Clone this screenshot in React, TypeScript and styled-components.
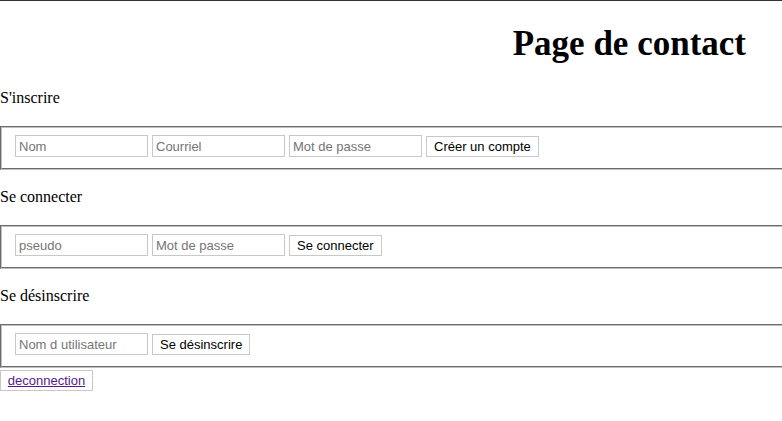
import React from "react";
import styled, { createGlobalStyle } from "styled-components";

const Global = createGlobalStyle`
  html, body { margin: 0; padding: 0; background: #fff; }
  body { font-family: "Liberation Serif", "Times New Roman", serif; font-size: 16px; color: #000; }
`;

const Page = styled.div`
  border-top: 1px solid #333;
  overflow: hidden;
`;

const Header = styled.header`
  display: flex;
  justify-content: flex-end;
  padding-right: 36px;
`;

const Title = styled.h1`
  margin: 21px 0 0;
  font-family: "Liberation Serif", "Times New Roman", serif;
  font-weight: bold;
  font-size: 35px;
  line-height: 44px;
`;

const SectionLabel = styled.p<{ $first?: boolean }>`
  margin: ${(p) => (p.$first ? "23px" : "18px")} 0 19px;
  line-height: 18px;
  font-size: 16px;
`;

const Fieldset = styled.fieldset`
  margin: 0 -4px 0 0;
  padding: 7px 12px 11px 13px;
  border: 2px groove #c0c0c0;
  display: flex;
  align-items: center;
  gap: 4px;
  min-width: 0;
`;

const Input = styled.input`
  box-sizing: border-box;
  width: 133px;
  height: 22px;
  margin: 0;
  padding: 1px 3px;
  border: 1px solid #c8c8c8;
  font-family: "Liberation Sans", Arial, sans-serif;
  font-size: 13px;
  color: #000;
  outline: none;
  &::placeholder { color: #757575; }
`;

const Button = styled.button`
  box-sizing: border-box;
  height: 21px;
  margin: 0;
  padding: 0 7px;
  background: #fff;
  border: 1px solid #c8c8c8;
  border-radius: 0;
  font-family: "Liberation Sans", Arial, sans-serif;
  font-size: 13px;
  color: #000;
`;

const LinkButton = styled.button`
  box-sizing: border-box;
  margin: 2px 0 0;
  height: 21px;
  width: 93px;
  padding: 0;
  background: #fff;
  border: 1px solid #c8c8c8;
  display: block;
`;

const Link = styled.a`
  font-family: "Liberation Sans", Arial, sans-serif;
  font-size: 13px;
  color: #551a8b;
  text-decoration: underline;
`;

export default function App() {
  return (
    <>
      <Global />
      <Page>
        <Header>
          <Title>Page de contact</Title>
        </Header>
        <SectionLabel $first>S'inscrire</SectionLabel>
        <Fieldset>
          <Input placeholder="Nom" />
          <Input placeholder="Courriel" />
          <Input placeholder="Mot de passe" type="password" />
          <Button>Créer un compte</Button>
        </Fieldset>
        <SectionLabel>Se connecter</SectionLabel>
        <Fieldset>
          <Input placeholder="pseudo" />
          <Input placeholder="Mot de passe" type="password" />
          <Button>Se connecter</Button>
        </Fieldset>
        <SectionLabel>Se désinscrire</SectionLabel>
        <Fieldset>
          <Input placeholder="Nom d utilisateur" />
          <Button>Se désinscrire</Button>
        </Fieldset>
        <LinkButton>
          <Link href="#">deconnection</Link>
        </LinkButton>
      </Page>
    </>
  );
}
